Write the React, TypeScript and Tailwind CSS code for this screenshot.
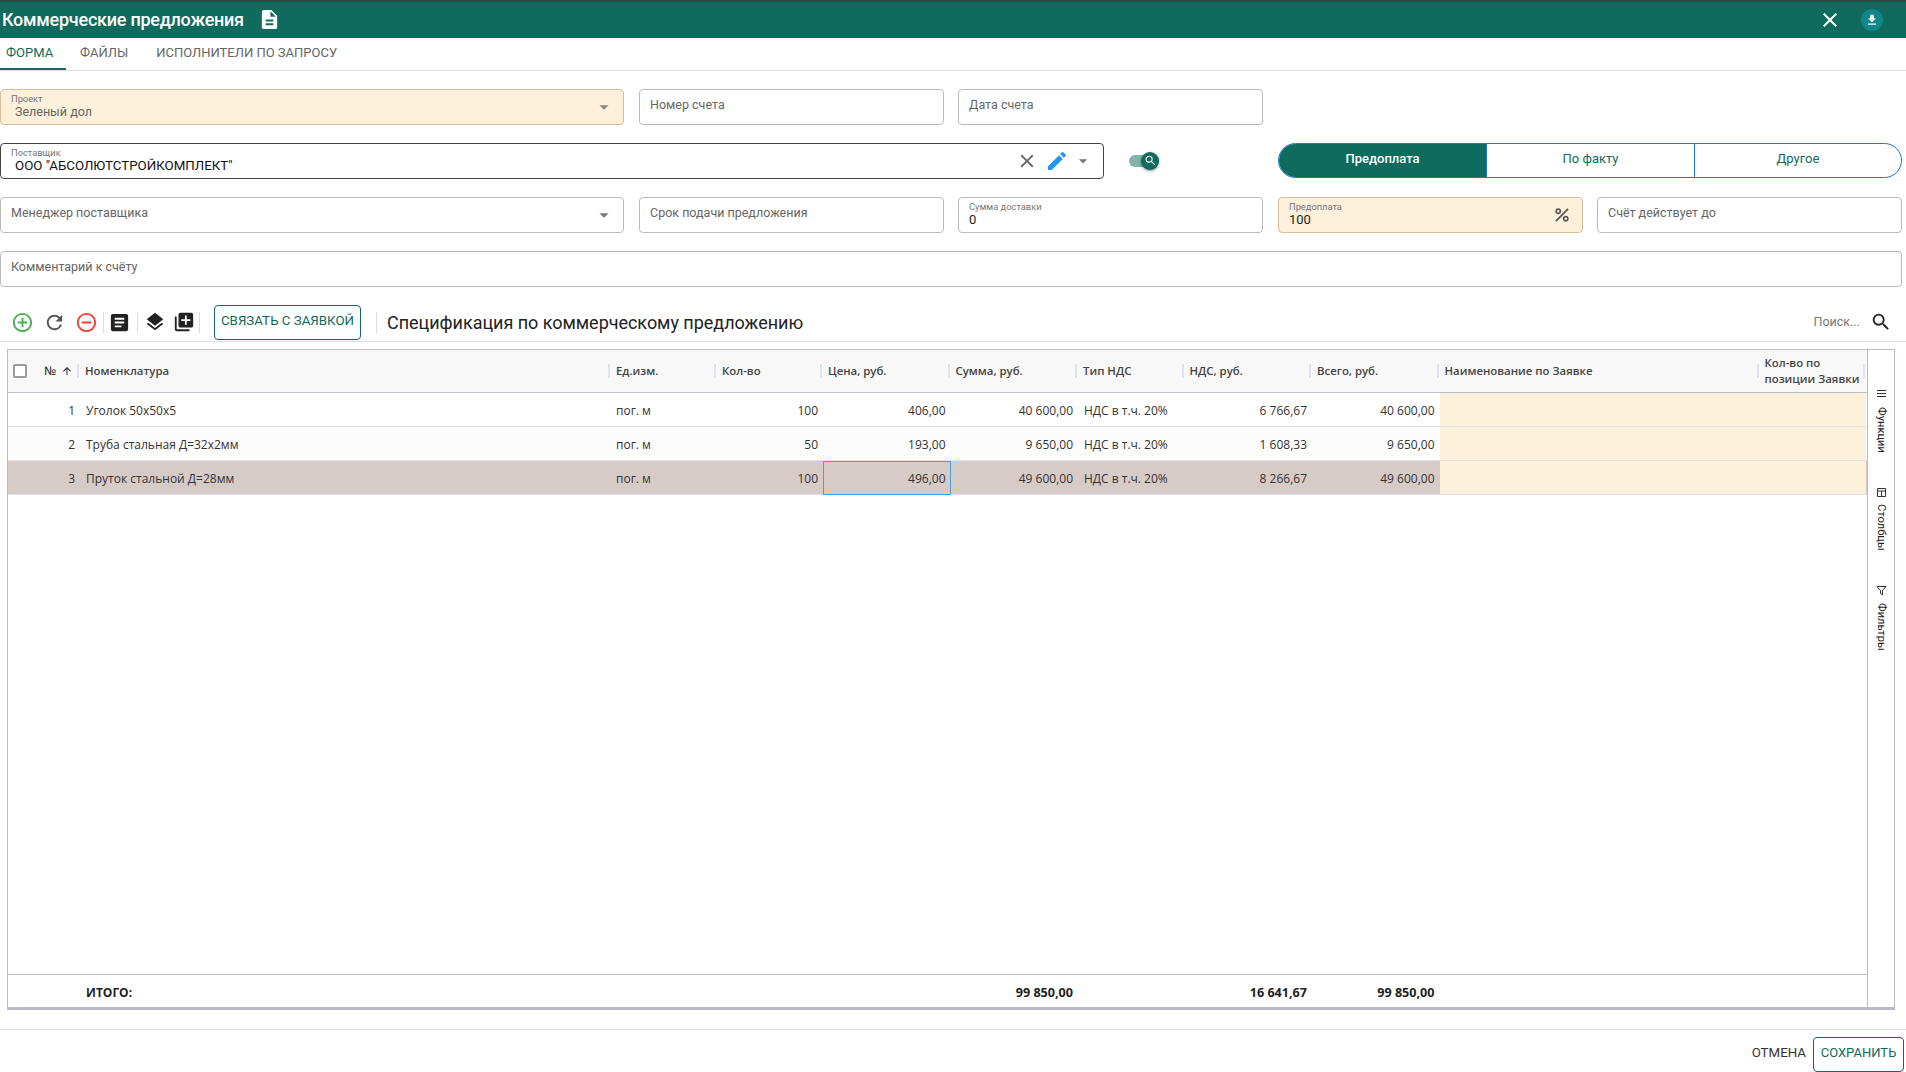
import type { ReactNode } from "react";
import {
  MdAddCircleOutline,
  MdArrowDropDown,
  MdArrowUpward,
  MdArticle,
  MdClose,
  MdDescription,
  MdDownload,
  MdEdit,
  MdLayers,
  MdLibraryAdd,
  MdPercent,
  MdRefresh,
  MdRemoveCircleOutline,
  MdSearch,
} from "react-icons/md";

const gridCols =
  "grid grid-cols-[72px_531px_106px_106px_127.5px_127.5px_106.5px_127.5px_127.5px_320px_106px]";
const cellRight = "flex items-center justify-end pr-[5px] pt-[4px]";
const cellLeft = "flex items-center pl-[5px] pt-[4px]";

const columns = [
  "Номенклатура",
  "Ед.изм.",
  "Кол-во",
  "Цена, руб.",
  "Сумма, руб.",
  "Тип НДС",
  "НДС, руб.",
  "Всего, руб.",
  "Наименование по Заявке",
  "Кол-во по позиции Заявки",
];

const rows = [
  { n: 1, name: "Уголок 50х50х5", qty: "100", price: "406,00", sum: "40 600,00", vat: "6 766,67", total: "40 600,00", bg: "bg-white" },
  { n: 2, name: "Труба стальная Д=32х2мм", qty: "50", price: "193,00", sum: "9 650,00", vat: "1 608,33", total: "9 650,00", bg: "bg-[#fcfcfc]" },
  { n: 3, name: "Пруток стальной Д=28мм", qty: "100", price: "496,00", sum: "49 600,00", vat: "8 266,67", total: "49 600,00", bg: "bg-[#d6cbc7]", selected: true },
];

function Field({
  label,
  value,
  valueClass = "text-[13px]",
  placeholder,
  className,
  children,
}: {
  label?: string;
  value?: string;
  valueClass?: string;
  placeholder?: string;
  className: string;
  children?: ReactNode;
}) {
  return (
    <div className={`flex h-9 items-center rounded border ${className}`}>
      <div className="min-w-0 flex-1 pl-[10px]">
        {placeholder ? (
          <div className="-mt-[3px] text-[12.5px] leading-5 text-[#666]">{placeholder}</div>
        ) : (
          <div className="-mt-[1px]">
            <div className="text-[9.3px] leading-3 text-[#777]">{label}</div>
            <div className={`leading-[14px] ${valueClass}`}>{value}</div>
          </div>
        )}
      </div>
      {children}
    </div>
  );
}

function Sep() {
  return <div className="h-[21px] w-px bg-[#ddd]" />;
}

function ToolIcon({ children }: { children: ReactNode }) {
  return <div className="flex w-[32px] justify-center">{children}</div>;
}

function SideTab({ icon, label, className }: { icon: ReactNode; label: string; className: string }) {
  return (
    <div className={`flex items-center [writing-mode:vertical-rl] ${className}`}>
      <span className="shrink-0">{icon}</span>
      <span className="text-[11.2px] leading-4 text-[#222]">{label}</span>
    </div>
  );
}

export default function App() {
  return (
    <div className="flex h-[1072px] w-[1906px] flex-col overflow-hidden bg-white font-['Roboto',sans-serif] text-[#222]">
      {/* Title bar */}
      <header className="flex h-[38px] items-center border-t-2 border-[#3a4248] bg-[#0e6b5e] text-white">
        <span className="ml-[2px] text-[18px] font-medium tracking-[-0.25px]">Коммерческие предложения</span>
        <MdDescription size={23} className="ml-[14px]" />
        <MdClose size={24} className="ml-auto mr-[19px]" />
        <div className="mr-[23px] flex h-[22px] w-[22px] items-center justify-center rounded-full bg-[#11868a]">
          <MdDownload size={14} />
        </div>
      </header>

      {/* Tabs */}
      <nav className="flex h-[33px] items-stretch border-b border-[#e0e0e0] text-[13px] text-[#666]">
        <div className="flex w-[66px] items-center justify-start border-b-2 border-[#0e6b5e] pl-[6px] text-[#0e6b5e]">
          ФОРМА
        </div>
        <div className="ml-[14px] flex items-center pb-[2px]">ФАЙЛЫ</div>
        <div className="ml-[28px] flex items-center pb-[2px]">ИСПОЛНИТЕЛИ ПО ЗАПРОСУ</div>
      </nav>

      {/* Form */}
      <section className="mt-[18px] flex flex-col gap-[18px]">
        <div className="flex">
          <Field label="Проект" value="Зеленый дол" valueClass="pl-[4px] text-[12.5px] text-[#666]" className="w-[624px] border-[#d4c19c] bg-[#fdf0da]">
            <MdArrowDropDown size={22} className="mr-[8px] text-[#888]" />
          </Field>
          <Field placeholder="Номер счета" className="ml-[15px] w-[305px] border-[#bbb]" />
          <Field placeholder="Дата счета" className="ml-[14px] w-[305px] border-[#bbb]" />
        </div>

        <div className="flex items-start">
          <Field label="Поставщик" value={'ООО "АБСОЛЮТСТРОЙКОМПЛЕКТ"'} valueClass="pl-[4px] text-[13.3px] text-[#111]" className="w-[1104px] border-[#444]">
            <MdClose size={22} className="mr-[7px] text-[#666]" />
            <MdEdit size={24} className="mr-[4px] text-[#2196f3]" />
            <MdArrowDropDown size={20} className="mr-[10px] text-[#777]" />
          </Field>
          <div className="ml-[25px] mt-[9px] flex items-center">
            <div className="h-3 w-[21px] rounded-l-full bg-[#7fb5ab]" />
            <div className="-ml-[9px] flex h-[18px] w-[18px] items-center justify-center rounded-full bg-[#0e6b5e] text-white shadow-[0_1px_3px_rgba(0,0,0,0.45)]">
              <MdSearch size={13} />
            </div>
          </div>
          <div className="ml-[119px] flex h-[35px] w-[624px] overflow-hidden rounded-full border border-[#1976d2] text-[13px] font-medium text-[#0e6b5e]">
            <div className="flex w-[207px] items-center justify-center bg-[#0e6b5e] pb-[4px] text-white">Предоплата</div>
            <div className="flex w-[208px] items-center justify-center border-l border-[#1976d2] pb-[4px] font-normal">По факту</div>
            <div className="flex flex-1 items-center justify-center border-l border-[#1976d2] pb-[4px] font-normal">Другое</div>
          </div>
        </div>

        <div className="flex">
          <Field placeholder="Менеджер поставщика" className="w-[624px] border-[#bbb]">
            <MdArrowDropDown size={22} className="mr-[8px] text-[#777]" />
          </Field>
          <Field placeholder="Срок подачи предложения" className="ml-[15px] w-[305px] border-[#bbb]" />
          <Field label="Сумма доставки" value="0" className="ml-[14px] w-[305px] border-[#bbb]" />
          <Field label="Предоплата" value="100" className="ml-[15px] w-[305px] border-[#d4c19c] bg-[#fdf0da]">
            <MdPercent size={20} className="mr-[10px] text-[#555]" />
          </Field>
          <Field placeholder="Счёт действует до" className="ml-[14px] w-[305px] border-[#bbb]" />
        </div>

        <Field placeholder="Комментарий к счёту" className="w-[1902px] border-[#bbb]" />
      </section>

      {/* Toolbar */}
      <div className="mt-[18px] flex h-[37px] items-center border-b border-[#e0e0e0] pb-px pl-[6px]">
        <ToolIcon><MdAddCircleOutline size={23} className="text-[#4caf50]" /></ToolIcon>
        <ToolIcon><MdRefresh size={23} className="text-[#555]" /></ToolIcon>
        <ToolIcon><MdRemoveCircleOutline size={23} className="text-[#f44336]" /></ToolIcon>
        <div className="ml-[1px]"><Sep /></div>
        <div className="flex w-[31px] justify-center"><MdArticle size={23} className="text-[#222]" /></div>
        <div className="ml-[2px]"><Sep /></div>
        <div className="ml-[1px] flex w-[32px] justify-center"><MdLayers size={22} className="text-[#222]" /></div>
        <div className="flex w-[26px] justify-center"><MdLibraryAdd size={22} className="text-[#222]" /></div>
        <div className="ml-[2px]"><Sep /></div>
        <button className="ml-[14px] flex h-[35px] w-[147px] items-center justify-center rounded border border-[#0e6b5e] pb-[2px] text-[13.3px] text-[#0e6b5e]">
          СВЯЗАТЬ С ЗАЯВКОЙ
        </button>
        <div className="ml-[15px]"><Sep /></div>
        <h2 className="ml-[10px] pt-[1px] text-[18px] leading-6 font-normal tracking-[-0.03px] text-[#222]">Спецификация по коммерческому предложению</h2>
        <span className="ml-auto text-[12.5px] text-[#777]">Поиск...</span>
        <MdSearch size={22} className="ml-[10px] mr-[14px] text-[#222]" />
      </div>

      {/* Grid */}
      <div className="ml-[7px] mt-[7px] flex h-[662px] w-[1888px] border border-b-[3px] border-[#babfc7] border-b-[#b9bcc8] font-['Open_Sans',sans-serif] text-[12px] text-[#333]">
        <div className="flex w-[1859px] flex-col">
          <div className={`${gridCols} h-[43px] border-b border-[#babfc7] bg-[#f8f8f8] text-[11.4px] font-semibold text-[#444]`}>
            <div className="flex items-center">
              <div className="ml-[5px] h-[14px] w-[14px] rounded-[2px] border-2 border-[#999] bg-white" />
              <span className="ml-[17px] text-[12px]">№</span>
              <MdArrowUpward size={12} className="ml-[5px] text-[#333]" />
              <div className="ml-auto mr-[1px] h-[14px] w-[2px] bg-[#dde2eb]" />
            </div>
            {columns.map((c) => (
              <div key={c} className="flex items-center pl-[5px]">
                <span className="flex-1 leading-[16px]">{c}</span>
                <div className="mr-[1px] h-[14px] w-[2px] bg-[#dde2eb]" />
              </div>
            ))}
          </div>

          {rows.map((r) => (
            <div key={r.n} className={`${gridCols} h-[34px] border-b border-[#e2e2e8] ${r.bg}`}>
              <div className={cellRight}>{r.n}</div>
              <div className={`${cellLeft} pl-[6px]`}>{r.name}</div>
              <div className={cellLeft}>пог. м</div>
              <div className={cellRight}>{r.qty}</div>
              <div className={r.selected ? "-mb-px flex items-center justify-end border-[1.5px] border-[#4a9fe0] pt-[3px] pr-[4px]" : cellRight}>{r.price}</div>
              <div className={cellRight}>{r.sum}</div>
              <div className={`${cellLeft} pl-[6px]`}>НДС в т.ч. 20%</div>
              <div className={cellRight}>{r.vat}</div>
              <div className={cellRight}>{r.total}</div>
              <div className="col-span-2 bg-[#fdf0da]" />
            </div>
          ))}

          <div className="flex-1" />

          <div className={`${gridCols} h-[33px] border-t border-[#babfc7] font-bold text-[#222]`}>
            <div />
            <div className={`${cellLeft} pl-[6px]`}>ИТОГО:</div>
            <div />
            <div />
            <div />
            <div className={`${cellRight} text-[12.6px]`}>99 850,00</div>
            <div />
            <div className={`${cellRight} text-[12.6px]`}>16 641,67</div>
            <div className={`${cellRight} text-[12.6px]`}>99 850,00</div>
          </div>
        </div>

        {/* Side tabs */}
        <aside className="flex flex-1 flex-col items-center border-l border-[#babfc7] pt-[38px] font-['Roboto',sans-serif]">
          <SideTab
            className="gap-[8px]"
            icon={
              <svg width="11" height="11" viewBox="0 0 11 11" className="block text-[#333]">
                <path d="M1 2.5h9M1 5.5h9M1 8.5h9" stroke="currentColor" strokeWidth="1" />
              </svg>
            }
            label="Функции"
          />
          <SideTab
            className="mt-[34px] gap-[6px]"
            icon={
              <svg width="11" height="11" viewBox="0 0 11 11" className="block text-[#333]">
                <path d="M1.5 1.5h8v8h-8zM1.5 4h8M5.5 4v5.5" fill="none" stroke="currentColor" strokeWidth="1" />
              </svg>
            }
            label="Столбцы"
          />
          <SideTab
            className="mt-[34px] gap-[7px]"
            icon={
              <svg width="11" height="11" viewBox="0 0 11 11" className="block text-[#333]">
                <path d="M1 1.5h9L6.5 5.5V10L4.5 8.5V5.5z" fill="none" stroke="currentColor" strokeWidth="1" />
              </svg>
            }
            label="Фильтры"
          />
        </aside>
      </div>

      {/* Footer actions */}
      <footer className="mt-[19px] flex flex-1 items-start border-t border-[#e0e0e0] pt-[7px]">
        <span className="ml-auto mt-[6px] text-[13.3px] text-[#333]">ОТМЕНА</span>
        <button className="ml-[7px] mr-[2px] h-[35px] w-[91px] rounded border border-[#0e6b5e] pb-[4px] text-[13px] text-[#0e6b5e]">
          СОХРАНИТЬ
        </button>
      </footer>
    </div>
  );
}
